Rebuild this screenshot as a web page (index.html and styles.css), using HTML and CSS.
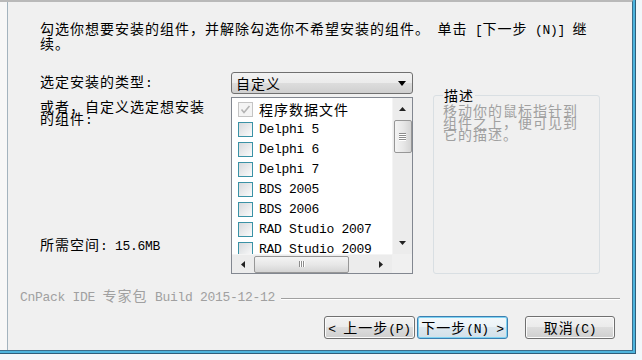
FILE: index.html
```html
<!DOCTYPE html>
<html lang="zh-CN">
<head>
    <meta charset="UTF-8">
    <meta name="viewport" content="width=device-width, initial-scale=1.0">
    <title>选择组件</title>
    <link rel="stylesheet" href="styles.css">
</head>
<body>

<div class="desk">
    <div class="frame">
        <div class="frame-glass">
            <div class="dialog">
                <div class="edge"></div>

                <div class="page">
                    <p class="intro">勾选你想要安装的组件，并解除勾选你不希望安装的组件。<span class="en"> </span>单击<span class="en"> [</span>下一步<span class="en"> (N)] </span>继<br>续。</p>

                    <div class="setup">
                        <div class="label type-label">选定安装的类型<span class="en">:</span></div>

                        <div class="combo">
                            <span>自定义</span>
                            <svg width="8" height="5" viewBox="0 0 8 5"><polygon points="0,0 8,0 4,5" fill="#000"/></svg>
                        </div>

                        <div class="label-col">
                            <div class="label">或者，自定义选定想安装的组件<span class="en">:</span></div>
                            <div class="label space">所需空间<span class="en">: 15.6MB</span></div>
                        </div>

                        <div class="listbox">
                            <div class="items">
                                <div class="item">
                                    <span class="check disabled">
                                        <svg width="13" height="13" viewBox="0 0 13 13"><path d="M2.5 6.5 L5 9.5 L10.5 3" fill="none" stroke="#b4b4b4" stroke-width="1.6"/></svg>
                                    </span>
                                    <span class="name cjk">程序数据文件</span>
                                </div>
                                <div class="item"><span class="check"></span><span class="name">Delphi 5</span></div>
                                <div class="item"><span class="check"></span><span class="name">Delphi 6</span></div>
                                <div class="item"><span class="check"></span><span class="name">Delphi 7</span></div>
                                <div class="item"><span class="check"></span><span class="name">BDS 2005</span></div>
                                <div class="item"><span class="check"></span><span class="name">BDS 2006</span></div>
                                <div class="item"><span class="check"></span><span class="name">RAD Studio 2007</span></div>
                                <div class="item"><span class="check"></span><span class="name">RAD Studio 2009</span></div>
                                <div class="item"><span class="check"></span><span class="name">RAD Studio 2010</span></div>
                            </div>

                            <div class="vscroll">
                                <div class="arrow">
                                    <svg width="7" height="4" viewBox="0 0 7 4"><polygon points="0,4 3.5,0 7,4" fill="#222"/></svg>
                                </div>
                                <div class="vthumb">
                                    <span></span><span></span><span></span><span></span>
                                </div>
                                <div class="track"></div>
                                <div class="arrow">
                                    <svg width="7" height="4" viewBox="0 0 7 4"><polygon points="0,0 7,0 3.5,4" fill="#222"/></svg>
                                </div>
                            </div>

                            <div class="hscroll">
                                <div class="arrow">
                                    <svg width="4" height="7" viewBox="0 0 4 7"><polygon points="4,0 4,7 0,3.5" fill="#222"/></svg>
                                </div>
                                <div class="hthumb">
                                    <span></span><span></span><span></span>
                                </div>
                                <div class="track"></div>
                                <div class="arrow">
                                    <svg width="4" height="7" viewBox="0 0 4 7"><polygon points="0,0 0,7 4,3.5" fill="#222"/></svg>
                                </div>
                            </div>

                            <div class="corner"></div>
                        </div>

                        <fieldset class="describe">
                            <legend>描述</legend>
                            <p>移动你的鼠标指针到组件之上，便可见到它的描述。</p>
                        </fieldset>
                    </div>

                    <div class="footer">
                        <span class="brand"><span class="en">CnPack IDE </span>专家包<span class="en"> Build 2015-12-12</span></span>
                        <span class="rule"></span>
                    </div>

                    <div class="actions">
                        <button class="btn"><span class="en">&lt; </span>上一步<span class="en">(P)</span></button>
                        <button class="btn default">下一步<span class="en">(N) &gt;</span></button>
                        <button class="btn cancel">取消<span class="en">(C)</span></button>
                    </div>
                </div>
            </div>
        </div>
    </div>
</div>

</body>
</html>
```

FILE: styles.css
```css
/* Reset */
* {
    margin: 0;
    padding: 0;
    box-sizing: border-box;
}

body {
    font-family: "Noto Sans CJK SC", "Noto Sans", sans-serif;
    font-size: 14px;
    letter-spacing: 1px;
    color: #000;
    background-color: #f2f7fa;
}

/* half-width latin text, SimSun style */
.en {
    font-family: "Liberation Mono", monospace;
    font-size: 13px;
    letter-spacing: -0.3px;
}

/* Window frame */
.desk {
    width: 642px;
    height: 360px;
    background-color: #f2f7fa;
}

.frame {
    width: 636px;
    height: 354px;
    border-right: 1px solid #2d5f7c;
    border-bottom: 1px solid #2d5f7c;
}

.frame-glass {
    height: 100%;
    border-right: 2px solid #4db5de;
    border-bottom: 2px solid #4db5de;
}

.dialog {
    display: flex;
    height: 100%;
    background-color: #f0f0f0;
    border-top: 2px solid #b9b9b9;
    border-right: 1px solid #3a6e8c;
    border-bottom: 1px solid #3a6e8c;
}

.edge {
    width: 8px;
    background-color: #f7f7f7;
    border-right: 1px solid #a3b3be;
}

.page {
    flex: 1;
    display: flex;
    flex-direction: column;
    padding: 0 12px;
}

/* Intro */
.intro {
    margin: 20px 0 0 20px;
    line-height: 13px;
}

/* Main grid */
.setup {
    display: grid;
    grid-template-columns: 191px 182px 187px;
    grid-template-rows: 22px 177px;
    row-gap: 3px;
    margin: 22px 0 0 20px;
}

.type-label {
    grid-column: 1;
    grid-row: 1;
}

.combo {
    grid-column: 2;
    grid-row: 1;
}

.label-col {
    grid-column: 1;
    grid-row: 2;
    display: flex;
    flex-direction: column;
}

.listbox {
    grid-column: 2;
    grid-row: 2;
}

.label {
    width: 172px;
    line-height: 12px;
    padding-top: 3px;
}

.label.space {
    margin-top: auto;
    margin-bottom: 21px;
}

/* Combo box */
.combo {
    display: flex;
    align-items: center;
    justify-content: space-between;
    padding: 0 6px 0 4px;
    border: 1px solid #707070;
    border-radius: 3px;
    background: linear-gradient(#f2f2f2 0%, #ebebeb 50%, #dddddd 50%, #cfcfcf 100%);
    line-height: 14px;
}

/* List box */
.listbox {
    display: grid;
    grid-template-columns: 1fr 20px;
    grid-template-rows: 1fr 19px;
    border: 1px solid #828790;
    background-color: #fff;
    overflow: hidden;
}

.items {
    padding-top: 1px;
    overflow: hidden;
}

.item {
    display: flex;
    align-items: center;
    gap: 6px;
    height: 20px;
    padding-left: 6px;
    white-space: nowrap;
}

.item .name {
    font-family: "Liberation Mono", monospace;
    font-size: 13px;
    letter-spacing: -0.3px;
}

.item .name.cjk {
    font-family: "Noto Sans CJK SC", sans-serif;
    font-size: 14px;
    letter-spacing: 1px;
}

.check {
    flex: none;
    width: 15px;
    height: 15px;
    border: 1px solid #3a92a6;
    background: linear-gradient(135deg, #d6d9dc, #fbfbfb);
}

.check.disabled {
    border-color: #c4c4c4;
    background: #f4f4f4;
}

.check svg {
    display: block;
}

/* Scroll bars */
.vscroll {
    display: flex;
    flex-direction: column;
    align-items: center;
    background-color: #ececec;
    border-left: 1px solid #f4f4f4;
}

.vscroll .arrow {
    display: flex;
    align-items: center;
    justify-content: center;
    width: 100%;
    height: 22px;
}

.vscroll .track {
    flex: 1;
}

.vthumb {
    display: flex;
    flex-direction: column;
    align-items: center;
    justify-content: center;
    gap: 1px;
    width: 18px;
    height: 33px;
    border: 1px solid #979797;
    border-radius: 2px;
    background: linear-gradient(90deg, #f4f4f4, #e6e6e6 55%, #d4d4d4);
}

.vthumb span {
    width: 7px;
    height: 1px;
    background-color: #8c8c8c;
    box-shadow: 0 1px 0 #fff;
}

.hscroll {
    display: flex;
    align-items: center;
    background-color: #ececec;
    border-top: 1px solid #f4f4f4;
}

.hscroll .arrow {
    display: flex;
    align-items: center;
    justify-content: center;
    width: 22px;
    height: 100%;
}

.hscroll .track {
    flex: 1;
}

.hthumb {
    display: flex;
    align-items: center;
    justify-content: center;
    gap: 1px;
    width: 95px;
    height: 17px;
    border: 1px solid #979797;
    border-radius: 2px;
    background: linear-gradient(#f4f4f4, #e6e6e6 55%, #d4d4d4);
}

.hthumb span {
    width: 1px;
    height: 6px;
    background-color: #8c8c8c;
    box-shadow: 1px 0 0 #fff;
}

.corner {
    background-color: #f0f0f0;
}

/* Description group */
.describe {
    grid-column: 3;
    grid-row: 2;
    margin: -8px 0 0 20px;
    padding: 2px 9px 0;
    border: 1px solid #d9dfe3;
    border-radius: 3px;
}

.describe legend {
    padding: 0 1px;
    line-height: 13px;
}

.describe p {
    color: #a0a0a0;
    line-height: 12px;
}

/* Footer */
.footer {
    display: flex;
    align-items: center;
    gap: 6px;
    height: 16px;
    margin-top: 14px;
    color: #a0a0a0;
    line-height: 16px;
}

.footer .rule {
    flex: 1;
    margin-top: 5px;
    border-top: 1px solid #a0a0a0;
    border-bottom: 1px solid #fff;
}

/* Buttons */
.actions {
    display: flex;
    justify-content: flex-end;
    gap: 2px;
    margin-top: 12px;
    padding-right: 5px;
}

.btn {
    width: 91px;
    height: 23px;
    font-family: inherit;
    font-size: 14px;
    letter-spacing: 1px;
    color: #000;
    border: 1px solid #707070;
    border-radius: 3px;
    background: linear-gradient(#f2f2f2 0%, #ebebeb 50%, #dddddd 50%, #cfcfcf 100%);
    box-shadow: inset 0 0 0 1px #fbfbfb;
    line-height: 20px;
}

.btn.default {
    border-color: #3c7fb1;
    background: linear-gradient(#f3f8fb 0%, #ebf3f8 50%, #dde8ef 50%, #d3e0e9 100%);
    box-shadow: inset 0 0 0 1px #7fd3f2;
}

.btn.cancel {
    width: 90px;
    margin-left: 15px;
}
```
